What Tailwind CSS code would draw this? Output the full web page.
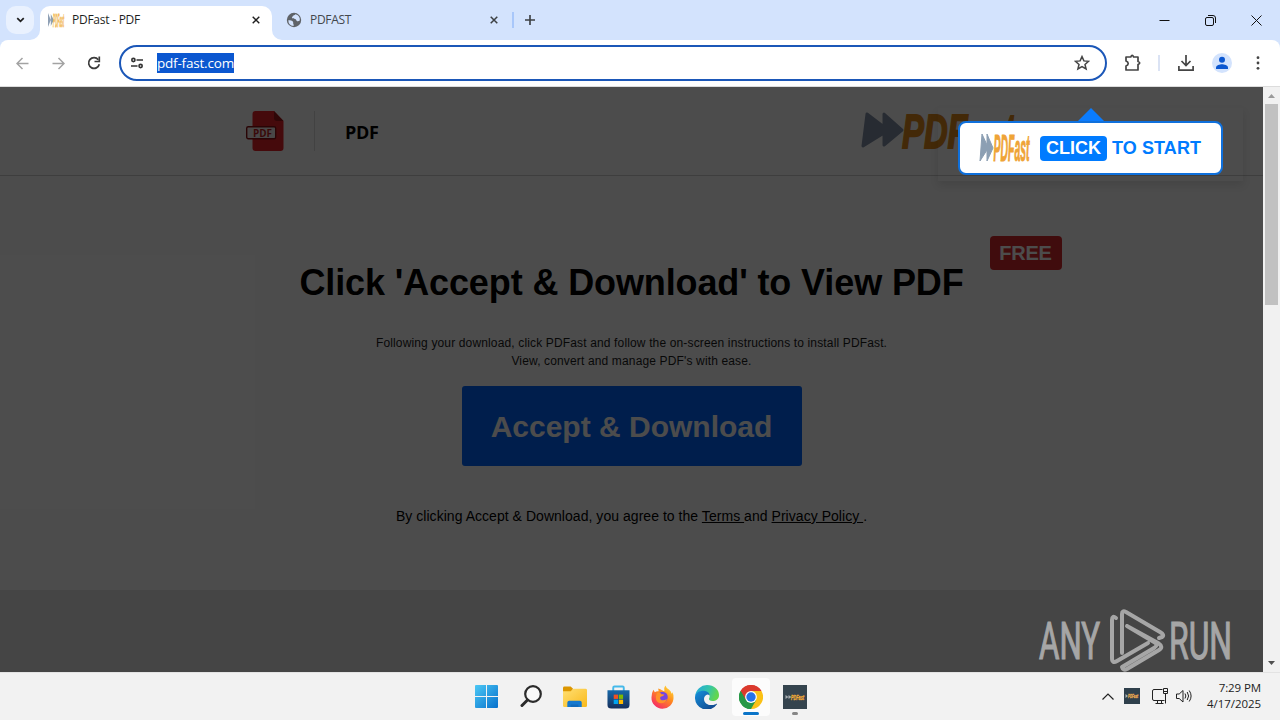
<!DOCTYPE html>
<html lang="en">
<head>
<meta charset="utf-8">
<title>PDFast - PDF</title>
<script src="https://cdn.jsdelivr.net/npm/@tailwindcss/browser@4"></script>
</head>
<body class="w-[1280px] h-[720px] overflow-hidden font-['Open_Sans',sans-serif] bg-white">
<div class="relative flex flex-col w-[1280px] h-[720px] overflow-hidden">

  <!-- Tab strip -->
  <div class="flex h-10 shrink-0 bg-[#d3e3fd]">
    <div class="flex w-10 pl-[6px] pt-[6px]">
      <div class="flex size-7 items-center justify-center rounded-[10px] bg-[#e9f1fe]">
        <svg class="w-[9px] h-[6px]" viewBox="0 0 10 7" fill="none" stroke="#1f1f1f" stroke-width="2"><path d="M1.2 1.2 5 5l3.800-3.800"/></svg>
      </div>
    </div>
    <div class="relative mt-[6px] flex h-[34px] w-[232px] items-center rounded-t-[10px] bg-white pl-2 pb-[6px]">
      <svg class="absolute -left-[10px] bottom-0 size-[10px]" viewBox="0 0 10 10"><path d="M10 0v10H0A10 10 0 0 0 10 0" fill="#fff"/></svg>
      <svg class="absolute -right-[10px] bottom-0 size-[10px]" viewBox="0 0 10 10"><path d="M0 0v10h10A10 10 0 0 1 0 0" fill="#fff"/></svg>
      <svg class="size-4 shrink-0 overflow-visible" viewBox="0 0 16 16"><path d="M0 1 2.800 8V2l3 6-3 6V8L0 15z" fill="#8fa0b5"/><text x="5" y="14.500" font-family="Liberation Sans" font-weight="700" font-style="italic" font-size="18" textLength="11" lengthAdjust="spacingAndGlyphs" fill="#f3bd62" stroke="#f3bd62" stroke-width=".8">PDFast</text></svg>
      <span class="ml-2 w-[180px] shrink-0 text-[12px] leading-4 tracking-[-0.25px] text-[#1f1f1f]">PDFast - PDF</span>
      <svg class="size-[8px] shrink-0" viewBox="0 0 9 9" stroke="#1f1f1f" stroke-width="1.600"><path d="m.8.8 7.400 7.400M8.200.8.8 8.200"/></svg>
    </div>
    <div class="flex h-10 items-center pl-[14px]">
      <svg class="size-4" viewBox="0 0 16 16"><circle cx="8" cy="8" r="7.200" fill="#5f6368"/><path d="M2.300 8.200c2 .1 4 .2 4.700 1.600.5 1-.1 1.500.4 2.200.4.600.4 1.300.1 2A6 6 0 0 1 2.300 8.200M9.300 2.200C9 3.300 7 3.200 6.700 4.300c-.2.900-1 1.100-.7 2 .4.900 2 .4 3.200.7 1.200.4.9 1.800 2 2.200.900.300 1.800-.1 2.600-.600A6 6 0 0 0 9.300 2.200" fill="#d3e3fd"/></svg>
      <span class="ml-2 w-[180px] text-[12px] leading-4 tracking-[-0.3px] text-[#43474c]">PDFAST</span>
      <svg class="size-[8px]" viewBox="0 0 9 9" stroke="#3c4043" stroke-width="1.700"><path d="m.8.8 7.400 7.400M8.200.8.8 8.200"/></svg>
      <div class="ml-[14px] h-4 w-[2px] bg-[#a8c7fa]"></div>
      <svg class="ml-[11px] size-[10px]" viewBox="0 0 11 11" stroke="#3c4043" stroke-width="1.800"><path d="M5.500 0v11M0 5.500h11"/></svg>
    </div>
    <div class="ml-auto flex h-10 items-center">
      <svg class="size-[11px]" viewBox="0 0 11 11" stroke="#111" fill="none"><path d="M.5 5.500h10"/></svg>
      <svg class="ml-[35px] size-[11px]" viewBox="0 0 11 11" stroke="#111" fill="none"><rect x=".5" y="2.500" width="8" height="8" rx="1.500"/><path d="M3 .5h5a2.500 2.500 0 0 1 2.500 2.500v5"/></svg>
      <svg class="ml-[35px] mr-[18px] size-[11px]" viewBox="0 0 11 11" stroke="#111" fill="none"><path d="m.5.5 10 10M10.500.5l-10 10"/></svg>
    </div>
  </div>

  <!-- Toolbar -->
  <div class="bg-[#d3e3fd] shrink-0">
  <div class="flex h-[47px] items-center rounded-t-[8px] border-b border-[#dcdcdc] bg-white">
    <svg class="ml-4 size-[13px]" viewBox="0 0 13 13" stroke="#a3a3a3" stroke-width="1.500" fill="none"><path d="M12.500 6.500H1.500M6.500 1 1 6.500 6.500 12"/></svg>
    <svg class="ml-[23px] size-[13px]" viewBox="0 0 13 13" stroke="#a3a3a3" stroke-width="1.500" fill="none"><path d="M.5 6.500h11M6.500 1 12 6.500 6.500 12"/></svg>
    <svg class="ml-[22px] size-[14px]" viewBox="0 0 14 14" fill="none" stroke="#3c3c3c" stroke-width="1.700"><path d="M12.300 8.200A5.400 5.400 0 1 1 11.300 3.700"/><path d="M12.300.5v5H7.500"/></svg>
    <div class="ml-[18px] flex h-9 w-[988px] items-center rounded-full border-2 border-[#1b57b8] pl-[10px]">
      <svg class="h-3 w-[12px]" viewBox="0 0 12 12" fill="none" stroke="#333" stroke-width="1.600"><circle cx="2.400" cy="3" r="1.600"/><path d="M5.500 3H12M0 9h6.500"/><circle cx="9.600" cy="9" r="1.600"/></svg>
      <span class="ml-[14px] flex h-5 w-[77px] items-center bg-[#0b57d0] text-[13.500px] leading-5 tracking-[-0.2px] text-white whitespace-nowrap">pdf-fast.com</span>
      <svg class="ml-auto mr-[15px] size-4" viewBox="0 0 16 16" fill="none" stroke="#444" stroke-width="1.500"><path d="m8 1.600 1.900 4.300 4.700.4-3.600 3.100 1.100 4.600L8 11.600 3.900 14 5 9.400 1.400 6.300l4.700-.4z"/></svg>
    </div>
    <svg class="ml-[17px] size-[18px]" viewBox="0 0 18 18" fill="none" stroke="#444" stroke-width="1.700"><path d="M2 3h4.800q.6-1.700 1.400-1.700T9.600 3H14v4.500q1.700.6 1.700 1.500T14 10.500V16H2v-4q2.200-.8 2.200-2.500T2 7z" stroke-linejoin="round"/></svg>
    <div class="ml-[16px] h-4 w-[2px] bg-[#dbe3f4]"></div>
    <svg class="ml-[18px] size-4" viewBox="0 0 16 16" fill="none" stroke="#444" stroke-width="1.700"><path d="M8 0v10M3.500 6 8 10.500 12.500 6M.9 11v4.100h14.200V11"/></svg>
    <svg class="ml-[18px] size-5" viewBox="0 0 20 20"><circle cx="10" cy="10" r="10" fill="#d3e3fd"/><circle cx="10" cy="6.800" r="3" fill="#0b57d0"/><path d="M4 16v-1.500c0-2.300 4-3.300 6-3.300s6 1 6 3.300V16z" fill="#0b57d0"/></svg>
    <svg class="ml-6 h-[14px] w-1" viewBox="0 0 4 14" fill="#444"><circle cx="2" cy="1.700" r="1.400"/><circle cx="2" cy="7" r="1.400"/><circle cx="2" cy="12.300" r="1.400"/></svg>
  </div>
  </div>

  <!-- Viewport -->
  <div class="flex h-[585px] shrink-0">
    <main class="relative flex w-[1263px] flex-col overflow-hidden bg-white font-['Liberation_Sans',Arial,sans-serif] text-black">
      <header class="flex h-[89px] shrink-0 items-center border-b border-[#cfcfcf] pl-[246px]">
        <svg class="h-10 w-[39px]" viewBox="0 0 39 40"><path d="M9.500 0H28l9.500 10v27a3 3 0 0 1-3 3h-25a3 3 0 0 1-3-3V3a3 3 0 0 1 3-3" fill="#e8242a"/><path d="M28 0v7a3 3 0 0 0 3 3h6.500z" fill="#9b1418"/><rect x=".7" y="15.700" width="29" height="12" rx="1.500" fill="#f6eeee" stroke="#8b1013" stroke-width="1.400"/><text x="7" y="25.500" font-family="Open Sans" font-size="10" font-weight="700" textLength="19" lengthAdjust="spacingAndGlyphs" fill="#c01c20">PDF</text></svg>
        <div class="ml-[29px] h-10 w-px bg-[#dedede]"></div>
        <span class="ml-[30px] w-[517px] pt-[2px] font-['Open_Sans',sans-serif] text-[18px] tracking-[-0.3px] font-bold">PDF</span>
        <svg class="h-10 w-[156px] overflow-visible" viewBox="0 0 156 40"><path d="M5 3 22 16V3l18 16-18 15V22L1 35z" fill="#8491a8" stroke="#8491a8" stroke-width="3" stroke-linejoin="round"/><text x="40" y="37" font-family="Liberation Sans" font-weight="700" font-style="italic" font-size="48" textLength="113" lengthAdjust="spacingAndGlyphs" fill="#e28a1c" stroke="#e28a1c" stroke-width="1.800">PDFast</text></svg>
      </header>
      <section class="flex h-[414px] shrink-0 flex-col items-center">
        <div class="mt-[60px] flex h-[34px] w-[860px] justify-end">
          <span class="flex h-[34px] w-[72px] items-center justify-center rounded-[4px] bg-[#d8282e] text-[20px] font-bold tracking-[-0.2px] text-white">FREE</span>
        </div>
        <h1 class="-mt-[9px] whitespace-nowrap text-[36px] leading-[44px] tracking-[-0.12px] font-bold">Click 'Accept &amp; Download' to View PDF</h1>
        <p class="mt-[29px] text-center text-[12px] leading-[18px] tracking-[0.145px] text-[#1c1c1c]">Following your download, click PDFast and follow the on-screen instructions to install PDFast.<br>View, convert and manage PDF's with ease.</p>
        <div class="mt-4 flex h-20 w-[340px] items-center justify-center rounded-[3px] bg-[#0066ff] text-[30px] font-bold text-white">Accept &amp; Download</div>
        <p class="mt-[40px] whitespace-pre text-[14px] leading-5 tracking-[0.04px]">By clicking Accept &amp; Download, you agree to the <u class="underline-offset-1">Terms </u>and <u class="underline-offset-1">Privacy Policy </u>.</p>
      </section>
      <footer class="h-[82px] bg-[#e8e8e8]"></footer>

      <div class="absolute inset-0 bg-black/70"></div>

      <!-- Download prompt -->
      <div class="absolute left-[938px] top-[21px] flex w-[305px] flex-col items-center shadow-[0_4px_8px_rgba(0,0,0,0.1)] pb-[6px]">
        <svg class="h-[13px] w-[26px]" viewBox="0 0 26 13"><path d="M13 0 26 13H0z" fill="#0a7cff"/></svg>
        <div class="flex h-[54px] w-[265px] items-center rounded-[8px] border-2 border-[#0f70dc] bg-white pl-5">
          <svg class="h-[30px] w-[50px] overflow-visible" viewBox="0 0 50 30"><path d="M2 1 7 12V1l6 14-6 13V17L0 28z" fill="#8c9fb3" stroke="#8c9fb3"/><text x="13.500" y="28" font-family="Liberation Sans" font-weight="700" font-style="italic" font-size="37" textLength="36" lengthAdjust="spacingAndGlyphs" fill="#efa437" stroke="#efa437" stroke-width="1">PDFast</text></svg>
          <span class="ml-[10px] flex h-[25px] w-[67px] items-center justify-center rounded-[4px] bg-[#007bff] pt-px text-[18px] font-bold text-white">CLICK</span>
          <span class="ml-[5px] whitespace-nowrap pt-px text-[18px] font-bold tracking-[0.1px] text-[#007bff]">TO START</span>
        </div>
      </div>
    </main>
    <!-- Scrollbar -->
    <div class="flex w-[17px] flex-col items-center bg-[#f1f1f1]">
      <svg class="mt-[7px] h-[4px] w-[7px]" viewBox="0 0 7 4"><path d="M0 4 3.500 0 7 4z" fill="#9a9a9a"/></svg>
      <div class="mt-[6px] h-[201px] w-[13px] bg-[#c1c1c1]"></div>
      <svg class="mt-auto mb-[7px] h-[4px] w-[7px]" viewBox="0 0 7 4"><path d="M0 0h7L3.500 4z" fill="#505050"/></svg>
    </div>
  </div>

  <!-- Taskbar -->
  <div class="flex h-12 shrink-0 items-center border-t border-[#e3e3e3] bg-[#f2f2f2] pl-[475px]">
    <svg class="size-[23px]" viewBox="0 0 23 23"><defs><linearGradient id="w" x1="0" y1="0" x2="1" y2="1"><stop stop-color="#4cc8f5"/><stop offset="1" stop-color="#0670cc"/></linearGradient></defs><path d="M0 1q0-1 1-1h10v11H0zM12 0h10q1 0 1 1v10H12zM0 12h11v11H1q-1 0-1-1zM12 12h11v10q0 1-1 1H12z" fill="url(#w)"/></svg>
    <svg class="ml-[22px] size-[23px]" viewBox="0 0 23 23" fill="none" stroke="#2b2b2b"><circle cx="13" cy="9" r="7.800" fill="#f9f9f9" stroke-width="2.200"/><path d="M7.500 15 2 20.500" stroke-width="3" stroke-linecap="round"/></svg>
    <svg class="ml-[20px] h-[22px] w-[24px]" viewBox="0 0 25 22"><defs><linearGradient id="f" x1="0" y1="0" x2="1" y2="1"><stop stop-color="#ffdf73"/><stop offset="1" stop-color="#f9b91b"/></linearGradient></defs><path d="M0 1.500Q0 0 1.500 0H8l2.500 2.500L8 6H0z" fill="#dc9600"/><path d="M0 5h8l3-2.500h12.500Q25 2.500 25 4v16q0 1.500-1.500 1.500h-22Q0 21.500 0 20z" fill="url(#f)"/><path d="M4.500 21.500V17q0-2 2-2h11q2 0 2 2v4.500z" fill="#1478cf"/><path d="M8 21.500v-2q0-.8.8-.8h6.400q.8 0 .8.800v2z" fill="#1069ba"/></svg>
    <svg class="ml-[20px] h-6 w-[23px]" viewBox="0 0 24 24"><defs><linearGradient id="s" x1="0" y1="0" x2="0" y2="1"><stop stop-color="#1769aa"/><stop offset="1" stop-color="#162f5c"/></linearGradient></defs><path d="M6.500 6V2.300q0-1.300 1.300-1.300h8.400q1.300 0 1.300 1.300V6" fill="none" stroke="#45b9ea" stroke-width="2"/><path d="M.5 5h23v15q0 4-4 4h-15q-4 0-4-4z" fill="url(#s)"/><path d="M7 9.500h4.500V14H7z" fill="#f25022"/><path d="M12.300 9.500h4.500V14h-4.500z" fill="#7fba00"/><path d="M7 14.800h4.500v4.500H7z" fill="#00a4ef"/><path d="M12.300 14.800h4.500v4.500h-4.500z" fill="#ffb900"/></svg>
    <svg class="ml-[21px] h-6 w-[23px]" viewBox="0 0 24 24"><defs><linearGradient id="ff" x1=".9" y1="0" x2=".2" y2="1"><stop stop-color="#ffe53b"/><stop offset=".45" stop-color="#ff8a1e"/><stop offset="1" stop-color="#f5246b"/></linearGradient></defs><path d="M2.500 4.500 4 7q1.800-1.300 4-1L7.500 3Q10 3.500 11.500 5L14 6Q13 2.500 15 0q1 3 4 4.500 2 1.500 2.500 4l.8-1.500Q24 10 23.500 13A11.500 11.500 0 0 1 .5 12.500Q.5 8 2.500 4.500" fill="url(#ff)"/><circle cx="12" cy="12" r="5.500" fill="#7545e0"/><path d="M6 8q3-2 5 1l3 .5q-1 2-3.500 2Q8.500 13 10.500 15q3 1 6-1-1.500 4.500-6 4.500Q5 18 5 12z" fill="#ff9128"/></svg>
    <svg class="ml-[21px] size-6" viewBox="0 0 24 24"><defs><linearGradient id="e1" x1="0" y1="0" x2="1" y2=".3"><stop stop-color="#23a8e0"/><stop offset=".6" stop-color="#35c5a8"/><stop offset="1" stop-color="#62d64e"/></linearGradient><linearGradient id="e2" x1="0" y1="0" x2="1" y2="1"><stop stop-color="#1590dd"/><stop offset="1" stop-color="#113f83"/></linearGradient></defs><path d="M.2 11A12 12 0 0 1 12 0c7 0 12 4.500 12 10 0 4-3 6-6.500 6-2.500 0-4-1-3.500-2.500 1.500-2 .5-5.500-3.500-5.500C5 8 1 10 .2 11" fill="url(#e1)"/><path d="M0 12C.5 7.500 5 5.500 9 5.800c3 .2 5.500 2.200 5.500 4.500C12 8 9 11 9 14c0 4 4 6.500 8 6 2 0 3.500-.8 4.500-1.300.5-.2.700.2.500.6A12 12 0 0 1 0 12" fill="url(#e2)"/></svg>
    <div class="ml-[13px] flex h-[38px] w-[38px] flex-col items-center rounded-[4px] bg-[#fcfcfc] pt-[7px]">
      <svg class="size-6 shrink-0" viewBox="0 0 24 24"><path d="M12 12 1.600 6A12 12 0 0 1 22.400 6z" fill="#db3a2e"/><path d="M12 12 22.400 6A12 12 0 0 1 12 24z" fill="#fbc116"/><path d="M12 12v12A12 12 0 0 1 1.600 6z" fill="#279847"/><path d="M12 6h10.400L17.200 15z" fill="#fbc116"/><path d="M12 6h10.400A12 12 0 0 0 1.600 6l5.200 9z" fill="#db3a2e"/><path d="M6.800 15 1.600 6A12 12 0 0 0 12 24l5.200-9z" fill="#279847"/><circle cx="12" cy="12" r="5.900" fill="#fff"/><circle cx="12" cy="12" r="4.700" fill="#2672e8"/></svg>
      <div class="mt-[3px] h-[3px] w-4 rounded-full bg-[#0a74c8]"></div>
    </div>
    <div class="ml-[13px] flex h-[38px] w-6 flex-col items-center pt-[7px]">
      <svg class="size-6 shrink-0" viewBox="0 0 24 24"><path d="M0 0h24v24H0z" fill="#35444e"/><path d="m2.500 10 3 2-3 2zm3 0 3 2-3 2z" fill="#a8adb1"/><text x="8" y="14.800" font-family="Liberation Sans" font-weight="700" font-style="italic" font-size="7.500" textLength="13" lengthAdjust="spacingAndGlyphs" fill="#f1ac36" stroke="#f1ac36" stroke-width=".4">PDFast</text></svg>
      <div class="mt-[3px] h-[3px] w-[6px] rounded-full bg-[#868686]"></div>
    </div>
    <div class="ml-auto flex items-center pr-[19px]">
      <svg class="h-[8px] w-3" viewBox="0 0 12 8" fill="none" stroke="#222" stroke-width="1.200"><path d="m.5 6.500 5.500-5.500L11.500 6.500"/></svg>
      <svg class="ml-[10px] mb-[2px] size-4" viewBox="0 0 16 16"><path d="M0 0h16v16H0z" fill="#2f404c"/><path d="m1.500 6 2.500 2-2.500 2z" fill="#b0b4b8"/><text x="4" y="10" font-family="Liberation Sans" font-weight="700" font-style="italic" font-size="5" textLength="10" lengthAdjust="spacingAndGlyphs" fill="#f1ac50" stroke="#f1ac50" stroke-width=".3">PDFast</text></svg>
      <svg class="ml-[12px] mb-[2px] h-4 w-4" viewBox="0 0 16 16" fill="none" stroke="#222"><path d="M10.500 1.500H2A1.500 1.500 0 0 0 .5 3v8A1.500 1.500 0 0 0 2 12.500h10.500M5.500 12.500v3M9.500 12.500v3M3.500 15.500h8M11.500.5h4v5h-4zM13.500 5.500v10M11.500 3.500h4"/></svg>
      <svg class="ml-[8px] mb-[2px] h-[14px] w-4" viewBox="0 0 16 14" fill="none" stroke="#222"><path d="M.5 5v4.500h2.700L7 13V1.500L3.200 5zM9 4.500q1.700 2.500 0 5M11.200 3q2.800 4 0 8M13.200 1.500q3.800 5.500 0 11"/></svg>
      <div class="ml-[14px] mb-[2px] w-[55px] text-right text-[11.500px] leading-4 tracking-[-0.05px] whitespace-nowrap text-[#222]"><span class="tracking-[-0.1px]">7:29 PM</span><br>4/17/2025</div>
    </div>
  </div>

  <!-- Watermark -->
  <svg class="absolute left-[1036px] top-[605px] h-[70px] w-[200px]" viewBox="0 0 200 70" fill="none" stroke="#a6a6a6">
    <g fill="#a6a6a6" stroke-width="1.200" font-family="Roboto,sans-serif" font-size="52"><text x="3" y="54" textLength="61" lengthAdjust="spacingAndGlyphs">ANY</text><text x="133" y="54" textLength="63" lengthAdjust="spacingAndGlyphs">RUN</text></g>
    <path d="M80 13q-4-3-4 2v38q0 6 5 3l31-18M86 48V9q0-4 4-2l34 20q5 3 2 5l-3 1M91 21l31 17q6 4 1 7L91 64q-4 2-5-2l32-19q5-3 0-6L91 21" stroke-width="4" stroke-linecap="round" stroke-linejoin="round"/>
  </svg>
</div>
</body>
</html>
